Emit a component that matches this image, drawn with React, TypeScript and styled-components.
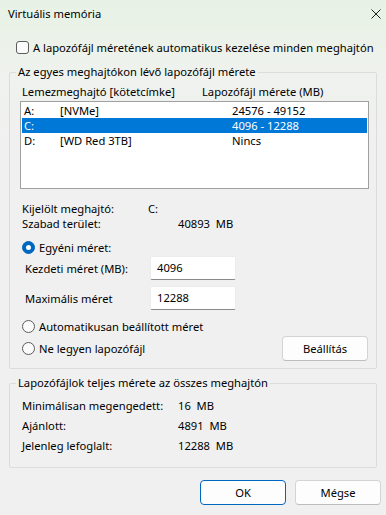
import React from 'react';
import styled, {createGlobalStyle} from 'styled-components';

const GlobalStyle = createGlobalStyle`
    html, body { margin: 0; padding: 0; background: #f0f0f0; }
    body { font-family: 'Segoe UI', 'Noto Sans', sans-serif; font-size: 11.2px; color: #000; }
`;

const Window = styled.div`
    width: 386px;
    height: 515px;
    display: flex;
    flex-direction: column;
    background: linear-gradient(180deg, #e7f2e5 0px, #eef2ec 60px, #f0f0f0 140px);
    overflow: hidden;`;

const TitleBar = styled.div`
    height: 27px;
    display: flex;
    align-items: center;
    justify-content: space-between;
    padding: 0 5px 0 8px;`;

const Content = styled.div`
    display: flex;
    flex-direction: column;
    padding: 0 9px;`;

const Line = styled.div<{ $h?: number, $indent?: number }>`
    display: flex;
    align-items: center;
    height: ${p => p.$h ?? 15}px;
    padding-left: ${p => p.$indent ?? 0}px;
    white-space: nowrap;`;

const Box = styled.span<{ $round?: boolean, $checked?: boolean }>`
    width: 11px;
    height: 11px;
    flex: none;
    margin-right: 4px;
    border: 1px solid ${p => p.$checked ? '#0067c0' : '#5c5c5c'};
    border-radius: ${p => p.$round ? '50%' : '3px'};
    background: ${p => p.$checked ? '#0067c0' : '#fbfbfb'};
    display: flex;
    align-items: center;
    justify-content: center;
    &::after {
        content: '';
        display: ${p => p.$checked ? 'block' : 'none'};
        width: 5px;
        height: 5px;
        border-radius: 50%;
        background: #fff;
    }`;

const Group = styled.fieldset<{ $h: number }>`
    margin: 0;
    height: ${p => p.$h}px;
    box-sizing: border-box;
    border: 1px solid #dcdcdc;
    border-radius: 2px;
    padding: 0 7px 0 10px;
    display: flex;
    flex-direction: column;
    min-width: 0;`;

const Legend = styled.legend`
    margin-left: -4px;
    padding: 0 2px;
    line-height: 16px;`;

const Cols = styled.div`
    display: grid;
    grid-template-columns: 180px 1fr;
    padding-left: 2px;
    height: 18px;
    align-items: center;
    margin-top: 2px;`;

const ListBox = styled.div`
    margin-top: 1px;
    width: 349px;
    height: 88px;
    box-sizing: border-box;
    border: 1px solid #a0a0a0;
    background: #fff;
    padding: 1px;`;

const ListRow = styled.div<{ $selected?: boolean }>`
    display: grid;
    grid-template-columns: 36px 172px 1fr;
    height: 15px;
    align-items: center;
    padding-left: 2px;
    background: ${p => p.$selected ? '#0078d7' : 'transparent'};
    color: ${p => p.$selected ? '#fff' : '#000'};`;

const InfoRow = styled.div<{ $val: number, $h?: number }>`
    display: grid;
    grid-template-columns: ${p => p.$val}px 1fr;
    height: ${p => p.$h ?? 15}px;
    align-items: center;
    padding-left: 2px;
    white-space: nowrap;`;

const FieldRow = styled.div`
    display: grid;
    grid-template-columns: 125px 86px;
    align-items: center;
    padding-left: 5px;
    margin-top: 6px;`;

const Input = styled.div`
    height: 24px;
    box-sizing: border-box;
    background: #fff;
    border: 1px solid #ececec;
    border-bottom: 1px solid #8a8a8a;
    border-radius: 2px;
    padding: 3px 0 0 6px;`;

const RadioFoot = styled.div`
    display: flex;
    align-items: flex-end;
    justify-content: space-between;
    margin-top: 2px;
    padding-right: 1px;`;

const Button = styled.button<{ $default?: boolean }>`
    font: inherit;
    color: #000;
    width: 86px;
    height: 25px;
    border-radius: 4px;
    background: #fdfdfd;
    border: 1px solid ${p => p.$default ? '#0067c0' : '#d4d4d4'};
    border-bottom-color: ${p => p.$default ? '#0067c0' : '#bdbdbd'};
    padding: 0;`;

const Footer = styled.div`
    display: flex;
    justify-content: flex-end;
    gap: 9px;
    padding-top: 12px;
    margin-right: -4px;`;

const CloseIcon = () => (
    <svg width="10" height="10" viewBox="0 0 10 10">
        <path d="M0.5 0.5 L9.5 9.5 M9.5 0.5 L0.5 9.5" stroke="#222" strokeWidth="1" fill="none"/>
    </svg>
);

const drives = [
    { letter: 'A:', label: '[NVMe]', size: '24576 - 49152' },
    { letter: 'C:', label: '', size: '4096 - 12288', selected: true },
    { letter: 'D:', label: '[WD Red 3TB]', size: 'Nincs' },
];

export default function App() {
    return (
        <Window>
            <GlobalStyle />
            <TitleBar>
                <span>Virtuális memória</span>
                <CloseIcon />
            </TitleBar>
            <Content>
                <Line $h={16} $indent={7} style={{ marginTop: 12 }}>
                    <Box />A lapozófájl méretének automatikus kezelése minden meghajtón
                </Line>
                <Group $h={305} style={{ marginTop: 9 }}>
                    <Legend>Az egyes meghajtókon lévő lapozófájl mérete</Legend>
                    <Cols>
                        <span>Lemezmeghajtó [kötetcímke]</span>
                        <span>Lapozófájl mérete (MB)</span>
                    </Cols>
                    <ListBox>
                        {drives.map(d => (
                            <ListRow key={d.letter} $selected={d.selected}>
                                <span>{d.letter}</span>
                                <span>{d.label}</span>
                                <span>{d.size}</span>
                            </ListRow>
                        ))}
                    </ListBox>
                    <InfoRow $val={126} style={{ marginTop: 12 }}>
                        <span>Kijelölt meghajtó:</span>
                        <span>C:</span>
                    </InfoRow>
                    <InfoRow $val={156}>
                        <span>Szabad terület:</span>
                        <span>40893&nbsp; MB</span>
                    </InfoRow>
                    <Line $h={16} $indent={2} style={{ marginTop: 8 }}>
                        <Box $round $checked />Egyéni méret:
                    </Line>
                    <FieldRow style={{ marginTop: 1 }}>
                        <span>Kezdeti méret (MB):</span>
                        <Input>4096</Input>
                    </FieldRow>
                    <FieldRow>
                        <span>Maximális méret</span>
                        <Input>12288</Input>
                    </FieldRow>
                    <Line $h={16} $indent={2} style={{ marginTop: 8 }}>
                        <Box $round />Automatikusan beállított méret
                    </Line>
                    <RadioFoot>
                        <Line $h={16} $indent={2} style={{ marginBottom: 5 }}>
                            <Box $round />Ne legyen lapozófájl
                        </Line>
                        <Button>Beállítás</Button>
                    </RadioFoot>
                </Group>
                <Group $h={93} style={{ marginTop: 6 }}>
                    <Legend>Lapozófájlok teljes mérete az összes meghajtón</Legend>
                    <InfoRow $val={156} $h={20} style={{ marginTop: 4 }}>
                        <span>Minimálisan megengedett:</span>
                        <span>16&nbsp; MB</span>
                    </InfoRow>
                    <InfoRow $val={156} $h={20}>
                        <span>Ajánlott:</span>
                        <span>4891&nbsp; MB</span>
                    </InfoRow>
                    <InfoRow $val={156} $h={20}>
                        <span>Jelenleg lefoglalt:</span>
                        <span>12288&nbsp; MB</span>
                    </InfoRow>
                </Group>
                <Footer>
                    <Button $default>OK</Button>
                    <Button>Mégse</Button>
                </Footer>
            </Content>
        </Window>
    );
}
